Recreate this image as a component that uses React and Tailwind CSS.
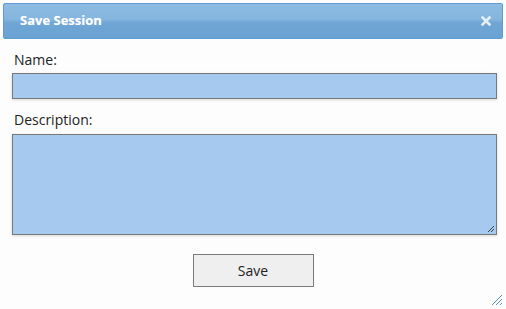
export default function App() {
  return (
    <div className="w-[506px] h-[309px] bg-[#fdfdfd] relative overflow-hidden" style={{ fontFamily: '"Open Sans", "Noto Sans", sans-serif' }}>
      <div className="pt-[3px] px-[3px]">
        <div className="h-[36px] border border-[#5f9cd0] rounded-[2px] bg-[linear-gradient(to_bottom,#8ebce2_0%,#84b5de_45%,#6fa6d5_55%,#6aa2d3_100%)] flex items-center justify-between pl-[16px] pr-[10px]">
          <span className="text-white font-bold text-[13px] [text-shadow:0_0_1px_rgba(255,255,255,0.4)]">Save Session</span>
          <svg width="10" height="10" viewBox="0 0 10 10" className="mr-[1px]">
            <path d="M1.5 1.5 L8.5 8.5 M8.5 1.5 L1.5 8.5" stroke="#e8eef6" strokeWidth="2.6" strokeLinecap="square" />
          </svg>
        </div>
      </div>
      <div className="px-[12px] pr-[9px] pt-[11px]">
        <div className="pl-[2px] text-[14px] text-[#222] leading-[20px] h-[20px]">Name:</div>
        <div className="mt-[3px] h-[26px] bg-[#a6c9ef] border border-[#787878] shadow-[0_1px_3px_rgba(0,0,0,0.15)]"></div>
        <div className="pl-[2px] mt-[11px] text-[14px] text-[#222] leading-[20px] h-[20px]">Description:</div>
        <div className="mt-[4px] h-[101px] bg-[#a6c9ef] border border-[#787878] shadow-[0_1px_3px_rgba(0,0,0,0.15)] relative">
          <svg width="8" height="8" viewBox="0 0 8 8" className="absolute right-[1px] bottom-[1px]">
            <path d="M7 1 L1 7 M7 4 L4 7" stroke="#444" strokeWidth="1" />
          </svg>
        </div>
        <div className="flex justify-center mt-[19px]">
          <div className="ml-[-3px] w-[121px] h-[33px] bg-[#efefef] border border-[#7a7a7a] flex items-center justify-center text-[14px] text-[#222]">Save</div>
        </div>
      </div>
      <svg width="12" height="12" viewBox="0 0 12 12" className="absolute right-[3px] bottom-[3px]">
        <path d="M11 1 L1 11 M11 5 L5 11 M11 9 L9 11" stroke="#5b8fcc" strokeWidth="1" />
      </svg>
    </div>
  );
}
